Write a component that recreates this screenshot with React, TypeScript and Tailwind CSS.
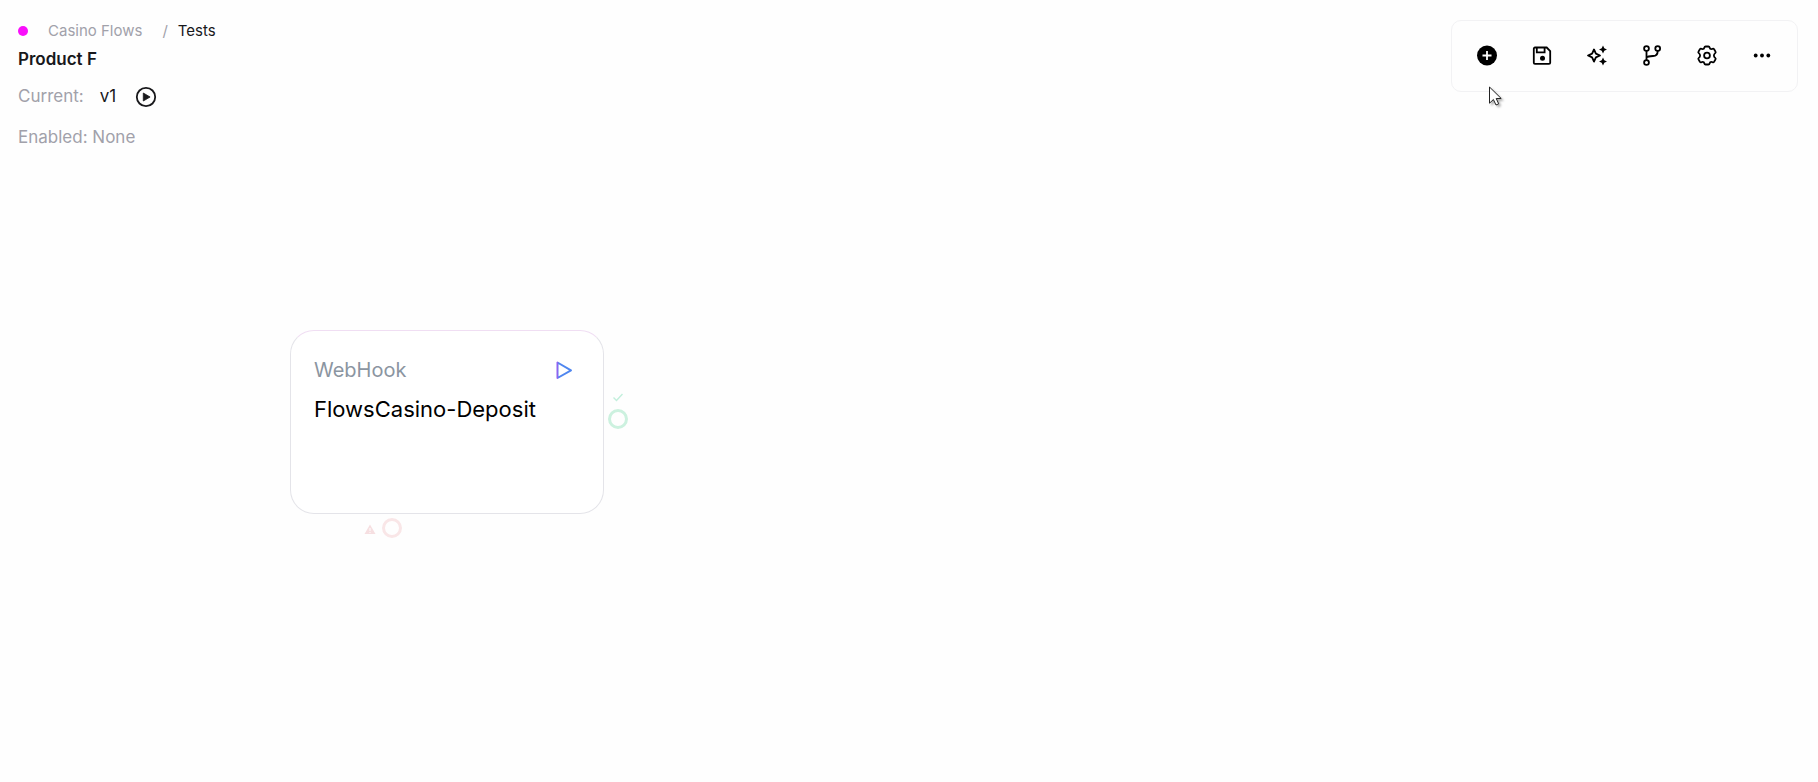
import type { ReactNode } from 'react';

interface Tool {
  label: string;
  icon: ReactNode;
}

const TOOLS: Tool[] = [
  {
    label: 'Add node',
    icon: (
      <svg viewBox="0 0 24 24" className="size-6">
        <circle cx="12" cy="11.500" r="10" fill="currentColor" />
        <path d="M12 7v9M7.500 11.500h9" stroke="#fff" strokeWidth="1.800" />
      </svg>
    ),
  },
  {
    label: 'Save',
    icon: (
      <svg viewBox="0 0 24 24" className="size-6" fill="none" stroke="currentColor" strokeWidth="1.800">
        <path d="M5 3.500h11.700L20.200 7v11.700a1.200 1.200 0 0 1-1.200 1.200H5a1.200 1.200 0 0 1-1.200-1.200v-14A1.200 1.200 0 0 1 5 3.500Z" />
        <path d="M6.800 4v4.300h7.800V4" />
        <circle cx="12.500" cy="14.200" r="2.500" fill="currentColor" stroke="none" />
      </svg>
    ),
  },
  {
    label: 'Generate',
    icon: (
      <svg viewBox="0 0 24 24" className="size-6" fill="currentColor">
        <path
          d="M9 5.500 10.900 9.600 15 11.500l-4.100 1.900L9 17.500l-1.900-4.100L3 11.500l4.100-1.900Z"
          fill="none"
          stroke="currentColor"
          strokeWidth="1.800"
          strokeLinejoin="round"
        />
        <path d="M18 1.500l1.300 2.700L22 5.500l-2.700 1.300L18 9.500l-1.300-2.700L14 5.500l2.700-1.300ZM18 13.500l1.300 2.700L22 17.500l-2.700 1.300L18 21.500l-1.300-2.700L14 17.500l2.700-1.300Z" />
      </svg>
    ),
  },
  {
    label: 'Versions',
    icon: (
      <svg viewBox="0 0 24 24" className="size-6" fill="none" stroke="currentColor" strokeWidth="1.800">
        <circle cx="6.500" cy="4.500" r="2.400" />
        <circle cx="17.700" cy="4.500" r="2.400" />
        <circle cx="6.500" cy="18.500" r="2.400" />
        <path d="M6.500 6.900v9.200M17.700 6.900c0 3.600-1.800 5-4.700 5.100-3.200.1-5.500.2-6.500 1.600" />
      </svg>
    ),
  },
  {
    label: 'Settings',
    icon: (
      <svg viewBox="0 0 24 24" className="size-6" fill="none" stroke="currentColor" strokeWidth="1.800" strokeLinejoin="round">
        <path d="M10.600 2.500h2.800q1 0 1.200 1 .3 1.600 1.800 1.600.6 0 1.100-.3 1-.4 1.600.4l1.400 2.400q.5.900-.3 1.500-1.300 1-1.300 2.400t1.300 2.400q.8.600.3 1.500l-1.400 2.400q-.6.800-1.600.4-.5-.3-1.100-.3-1.500 0-1.800 1.600-.2 1-1.200 1h-2.800q-1 0-1.200-1-.3-1.600-1.800-1.600-.6 0-1.100.3-1 .4-1.600-.4l-1.400-2.400q-.5-.9.300-1.500 1.300-1 1.300-2.400T3.800 9.100Q3 8.500 3.500 7.600l1.400-2.400q.6-.8 1.600-.4.5.3 1.100.3 1.500 0 1.800-1.600.2-1 1.200-1Z" />
        <circle cx="12" cy="11.500" r="2.900" />
      </svg>
    ),
  },
  {
    label: 'More',
    icon: (
      <svg viewBox="0 0 24 24" className="size-6" fill="currentColor">
        <circle cx="5.700" cy="11.500" r="1.900" />
        <circle cx="12" cy="11.500" r="1.900" />
        <circle cx="18.300" cy="11.500" r="1.900" />
      </svg>
    ),
  },
];

function FlowHeader() {
  return (
    <header className="flex flex-col text-[#18181b]">
      <nav aria-label="Breadcrumb" className="flex h-6 items-center text-[15px]">
        <span className="mr-5 size-[10px] rounded-full bg-[#f90ffb]" />
        <a href="#flows" className="mr-5 text-[#a1a1aa]">Casino Flows</a>
        <span className="mr-[10px] text-[#a1a1aa]">/</span>
        <a href="#tests">Tests</a>
      </nav>
      <h1 className="h-8 text-[17px] leading-8 font-semibold">Product F</h1>
      <div className="mt-[6px] flex h-8 items-center text-[17px]">
        <span className="mr-4 text-[#a1a1aa]">Current:</span>
        <span className="mr-5">v1</span>
        <button type="button" aria-label="Run current version">
          <svg viewBox="0 0 20 20" className="size-5 overflow-visible" fill="none" stroke="currentColor">
            <circle cx="10" cy="10" r="9.200" strokeWidth="1.800" />
            <path d="M7.300 6v8l6.800-4Z" fill="currentColor" strokeWidth=".8" strokeLinejoin="round" />
          </svg>
        </button>
      </div>
      <p className="mt-2 h-8 text-[17px] leading-8 text-[#a1a1aa]">Enabled: None</p>
    </header>
  );
}

function Toolbar() {
  return (
    <div role="toolbar" className="mt-px flex gap-[15px] rounded-[10px] border border-[#f2f2f4] p-[15px] text-black">
      {TOOLS.map((tool) => (
        <button key={tool.label} type="button" aria-label={tool.label} className="flex size-10 items-center justify-center">
          {tool.icon}
        </button>
      ))}
    </div>
  );
}

function WebhookNode() {
  return (
    <div className="absolute top-[330px] left-[290px] h-[184px] w-[314px] rounded-3xl border border-[#e4e4e9] border-t-[#f0def3] bg-white px-[23px] pt-[23px]">
      <div className="flex h-8 items-center justify-between">
        <span className="text-[20px] text-[#8b95a1]">WebHook</span>
        <button type="button" aria-label="Run node" className="mr-1">
          <svg viewBox="0 0 24 24" className="size-6" fill="none" strokeWidth="2" strokeLinejoin="round">
            <defs>
              <linearGradient id="play" x1="0" x2="1">
                <stop offset="0" stopColor="#8f63f0" />
                <stop offset=".1" stopColor="#4f86ef" />
                <stop offset="1" stopColor="#4f86ef" />
              </linearGradient>
            </defs>
            <path d="M5.500 4.500v15.500l13.500-7.700Z" stroke="url(#play)" />
          </svg>
        </button>
      </div>
      <h2 className="mt-[7px] text-[22px] leading-8 text-black">FlowsCasino-Deposit</h2>

      {/* success port */}
      <div className="absolute top-[61px] left-[317px] flex flex-col items-center gap-[7px]">
        <svg viewBox="0 0 10 10" className="size-[10px]" fill="none" stroke="#c2efdc" strokeWidth="1.400">
          <path d="M.5 5.500 3.500 8.500 9.500 2" />
        </svg>
        <span className="size-5 rounded-full border-3 border-[#ccf1df]" />
      </div>

      {/* error port */}
      <div className="absolute top-[187px] left-[73px] flex items-center gap-[6px]">
        <svg viewBox="0 0 12 12" className="size-3" fill="#f6dfe1">
          <path d="M6 2.500 11.500 12H.5Z" />
          <path d="M6 6v3M6 10v1" stroke="#fff" strokeWidth="1" />
        </svg>
        <span className="size-5 rounded-full border-3 border-[#f9e6e7]" />
      </div>
    </div>
  );
}

function Pointer() {
  return (
    <svg viewBox="0 0 16 22" className="pointer-events-none absolute top-[86px] right-[313px] h-[22px] w-4 overflow-visible drop-shadow-[2px_2px_1px_rgba(0,0,0,0.3)]">
      <path d="M.5 1v16.200l3.900-3.700 2.600 5.500 2.700-1.200-2.500-5.300h5Z" fill="#fff" stroke="#222" strokeWidth="1" />
    </svg>
  );
}

export default function App() {
  return (
    <main className="relative min-h-screen overflow-hidden bg-[#fefefe] font-['Inter',sans-serif]">
      <div className="flex items-start justify-between pt-[19px] pr-5 pl-[18px]">
        <FlowHeader />
        <Toolbar />
      </div>
      <WebhookNode />
      <Pointer />
    </main>
  );
}
